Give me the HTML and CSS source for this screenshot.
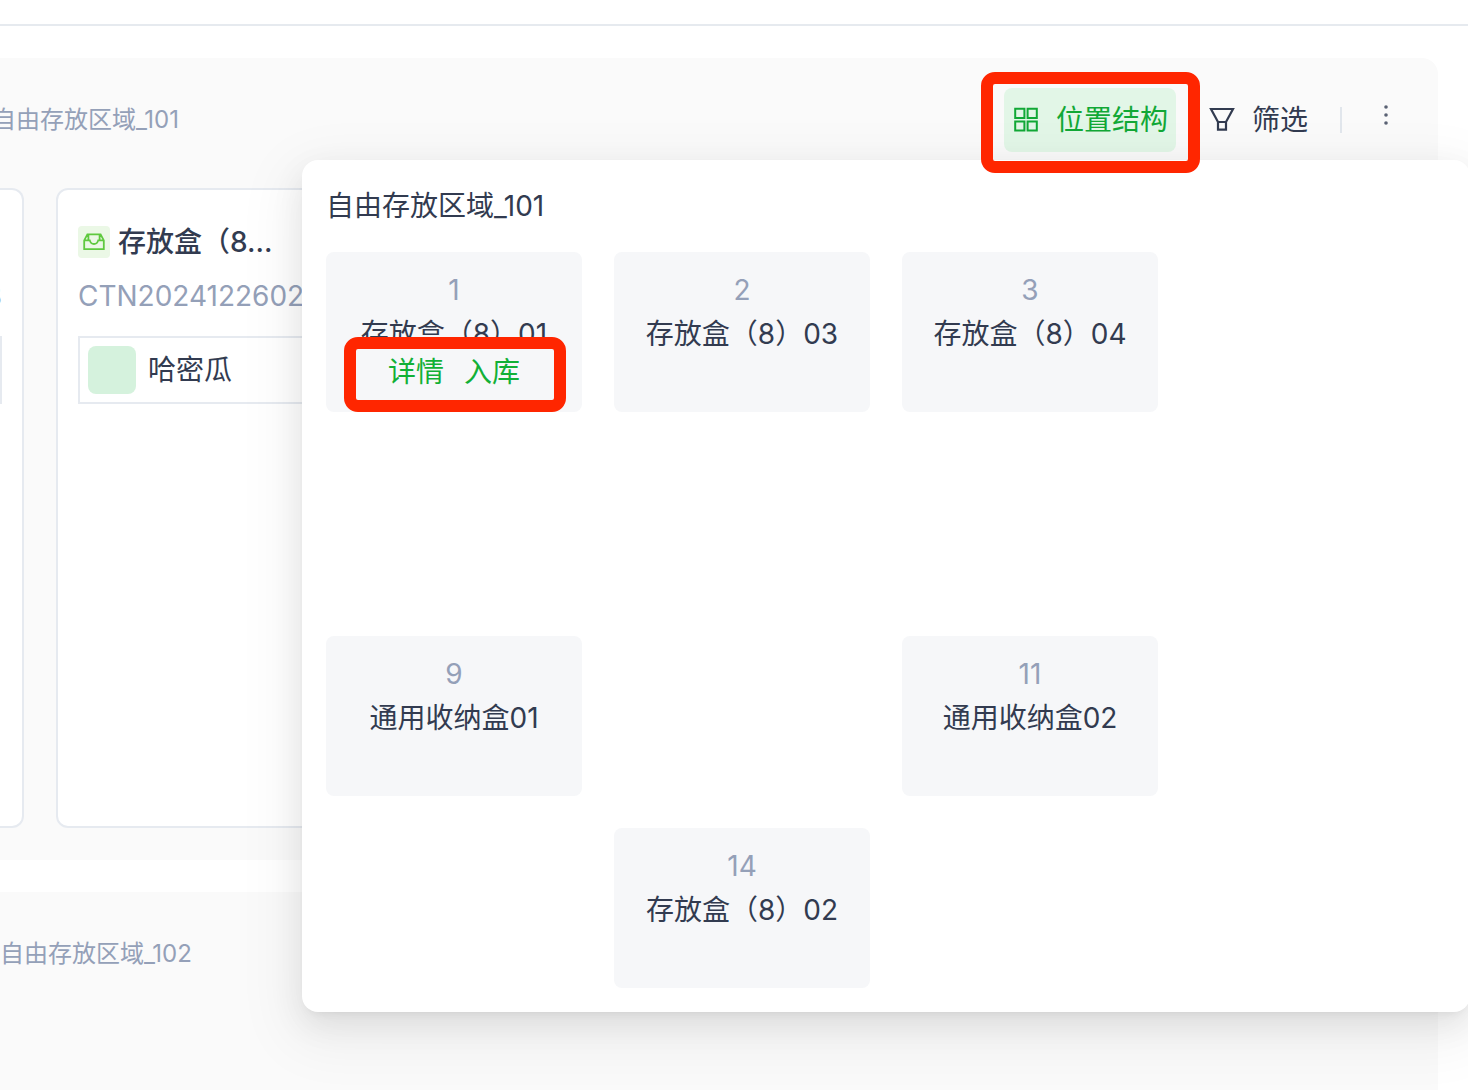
FILE: index.html
```html
<!DOCTYPE html>
<html lang="zh-CN">
<head>
<meta charset="utf-8">
<title>存放位置</title>
<link rel="stylesheet" href="styles.css">
</head>
<body>
<header class="topbar"></header>
<main class="content">
  <section class="zone">
    <div class="zone-header">
      <h2 class="zone-title zone-title-scrolled">自由存放区域_101</h2>
      <div class="toolbar">
        <button type="button" class="tool tool-active">
          <svg class="icon" viewBox="0 0 24 24" fill="none" stroke="currentColor" stroke-width="2"><path d="M1.2 .8h9.2v9.2H1.2zM13.6 .8h9.2v9.2h-9.2zM1.2 13.4h9.2v9.2H1.2zM13.6 13.4h9.2v9.2h-9.2z"/></svg>
          位置结构
        </button>
        <button type="button" class="tool">
          <svg class="icon" viewBox="0 0 24 24" fill="none" stroke="currentColor" stroke-width="2.2"><path d="M1 1h22l-7 13H8zM8 14v7.6h8V14"/></svg>
          筛选
        </button>
        <span class="divider"></span>
        <button type="button" class="more" aria-label="更多">
          <svg class="icon" viewBox="0 0 24 24" fill="currentColor"><circle cx="12" cy="-1" r="1.8"/><circle cx="12" cy="7" r="1.8"/><circle cx="12" cy="15" r="1.8"/></svg>
        </button>
      </div>
    </div>
    <div class="cards">
      <article class="card card-cut">
        <div class="card-head"></div>
        <p class="card-code">CTN202412260248</p>
        <div class="item"></div>
      </article>
      <article class="card">
        <div class="card-head">
          <span class="badge"><svg class="badge-icon" viewBox="0 0 22 18" fill="none" stroke="currentColor" stroke-width="1.8"><path d="M1.2 7.4v8.8h19.6V7.4L17.6 1.4H4.4zM1.2 7.4h5.6c.6 2.4 2 3.6 4.2 3.6s3.600-1.200 4.200-3.600h5.600M5.400 2v5M16.600 2v5"/></svg></span>
          <h3 class="card-title">存放盒（8...</h3>
        </div>
        <p class="card-code">CTN202412260248</p>
        <div class="item"><span class="swatch"></span>哈密瓜</div>
      </article>
    </div>
  </section>
  <section class="zone zone-next">
    <div class="zone-header">
      <h2 class="zone-title">自由存放区域_102</h2>
    </div>
  </section>
</main>

<div class="popover">
  <h2 class="popover-title">自由存放区域_101</h2>
  <div class="slots">
    <div class="slot">
      <span class="slot-no">1</span><span class="slot-name">存放盒（8）01</span>
      <div class="slot-links"><a href="#detail">详情</a><a href="#inbound">入库</a></div>
    </div>
    <div class="slot"><span class="slot-no">2</span><span class="slot-name">存放盒（8）03</span></div>
    <div class="slot"><span class="slot-no">3</span><span class="slot-name">存放盒（8）04</span></div>
    <div class="slot row-3 col-1"><span class="slot-no">9</span><span class="slot-name">通用收纳盒01</span></div>
    <div class="slot row-3 col-3"><span class="slot-no">11</span><span class="slot-name">通用收纳盒02</span></div>
    <div class="slot row-4 col-2"><span class="slot-no">14</span><span class="slot-name">存放盒（8）02</span></div>
  </div>
</div>

<div class="mark mark-tool"></div>
<div class="mark mark-links"></div>
</body>
</html>
```

FILE: styles.css
```css
* { box-sizing: border-box; }
html { overflow: hidden; height: 100%; }
body {
  position: relative;
  margin: 0;
  min-height: 100%;
  display: flex;
  flex-direction: column;
  overflow: hidden;
  background: #fff;
  color: #323b50;
  font: 28px/44px Inter, "Noto Sans CJK SC", sans-serif;
}
h2, h3, p { margin: 0; font-weight: 400; }
button { border: 0; padding: 0; background: none; color: inherit; font: inherit; }
a { color: #11b036; text-decoration: none; }

.topbar { height: 26px; border-bottom: 2px solid #e6eaef; }
.content {
  flex: 1;
  display: flex;
  flex-direction: column;
  gap: 32px;
  padding: 32px 30px 0 0;
}
.zone { padding: 30px 32px 32px 0; background: #fafafa; border-top-right-radius: 16px; }
.zone-next { flex: 1; min-height: 198px; border-radius: 0; }
.zone-header { display: flex; align-items: center; justify-content: space-between; height: 64px; }
.zone-title { color: #94a0b8; font-size: 24px; line-height: 36px; }
.zone-title-scrolled { margin-left: -8px; }

.toolbar { display: flex; align-items: center; gap: 24px; }
.tool {
  display: flex;
  align-items: center;
  gap: 18px;
  height: 64px;
  padding: 0 8px 0 10px;
  border-radius: 8px;
}
.tool-active { background: #e2f6e7; color: #11a836; }
.icon { width: 24px; height: 24px; overflow: visible; }
.divider { width: 2px; height: 26px; background: #e1e6ec; }
.more { display: flex; justify-content: center; width: 40px; color: #5a6274; }

.cards { display: grid; grid-template-columns: 24px 320px; gap: 32px; margin-top: 36px; }
.card { min-height: 640px; padding: 30px 20px; background: #fff; border: 2px solid #e6eaf0; border-radius: 12px; }
.card-cut { display: flex; flex-direction: column; align-items: flex-end; padding-left: 0; border-left: 0; border-radius: 0 12px 12px 0; }
.card-head { display: flex; align-items: center; gap: 8px; height: 44px; }
.badge { display: grid; place-items: center; width: 32px; height: 32px; border-radius: 4px; background: #ebf8e6; color: #5fc93f; }
.badge-icon { width: 22px; height: 18px; }
.card-title { font-size: 28px; font-weight: 500; }
.card-code { margin-top: 10px; color: #94a0b8; white-space: nowrap; }
.item { display: flex; align-items: center; gap: 12px; height: 68px; margin-top: 18px; padding: 0 8px; border: 2px solid #e6eaf0; }
.swatch { width: 48px; height: 48px; border-radius: 8px; background: #d5f2dd; }

.popover {
  position: absolute;
  top: 160px;
  left: 302px;
  right: -2px;
  padding: 24px;
  background: #fff;
  border-radius: 16px;
  box-shadow: 0 12px 32px rgba(0, 0, 0, .08), 0 6px 12px -8px rgba(0, 0, 0, .12), 0 18px 56px 16px rgba(0, 0, 0, .05);
}
.popover-title { font-size: 28px; }
.slots { display: grid; grid-template-columns: repeat(4, 256px); grid-auto-rows: 160px; gap: 32px; margin-top: 24px; }
.slot { display: flex; flex-direction: column; align-items: center; padding-top: 16px; border-radius: 8px; background: #f6f7f9; }
.slot-no { color: #94a0b8; }
.slot-links { display: flex; gap: 20px; line-height: 32px; }
.row-3 { grid-row: 3; }
.row-4 { grid-row: 4; }
.col-1 { grid-column: 1; }
.col-2 { grid-column: 2; }
.col-3 { grid-column: 3; }

.mark { position: absolute; border: 12px solid #ff2600; border-radius: 14px; }
.mark-tool { top: 72px; right: 268px; width: 219px; height: 101px; }
.mark-links { top: 337px; left: 344px; width: 222px; height: 75px; }
```
